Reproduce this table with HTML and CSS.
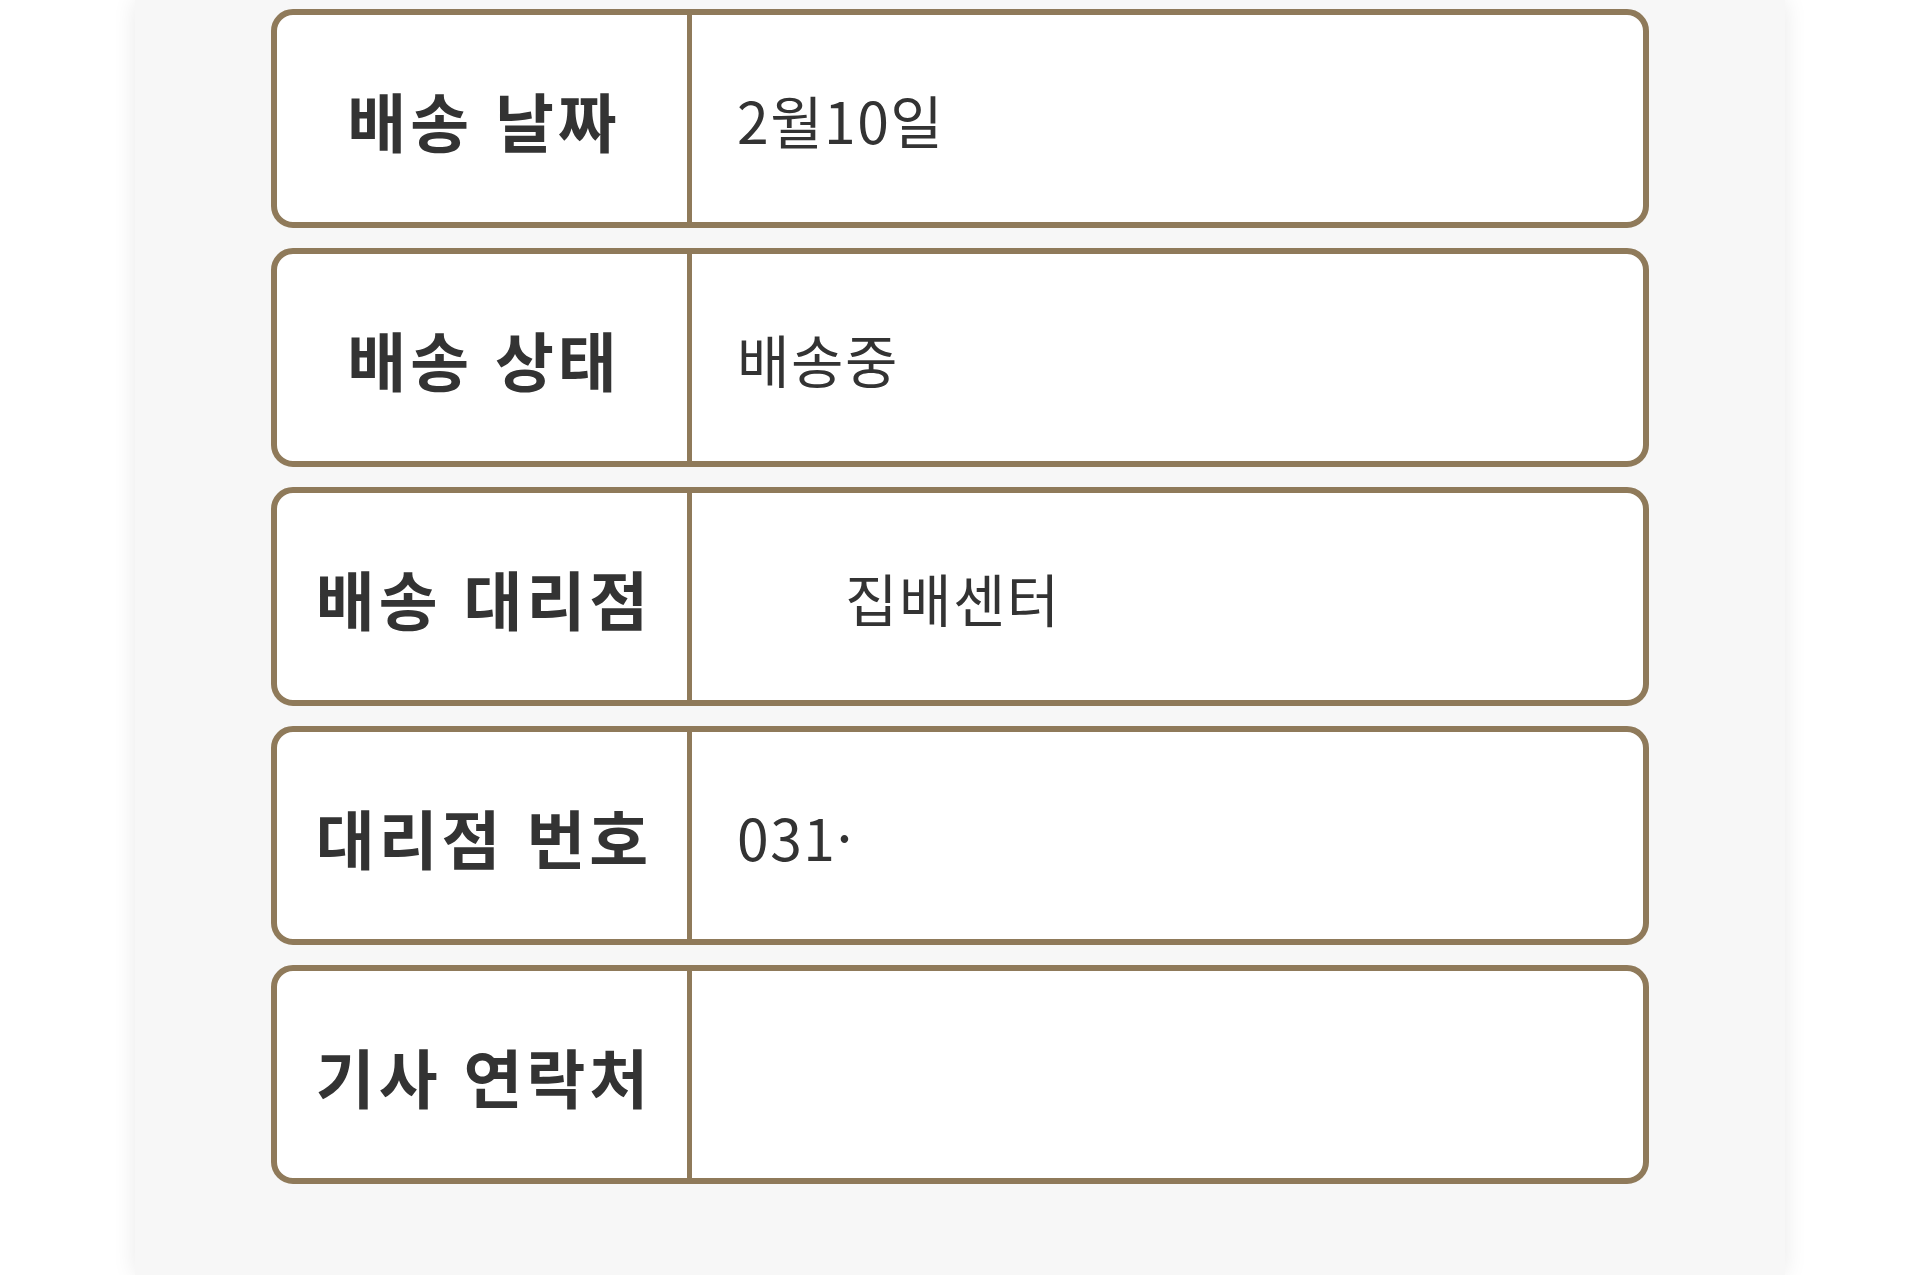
FILE: index.html
```html
<!DOCTYPE html>
<html lang="ko">
<head>
<meta charset="utf-8">
<title>배송 정보</title>
<link rel="stylesheet" href="styles.css">
</head>
<body>
<main class="panel">
  <section class="info-list">
    <div class="info-row">
      <div class="info-label">배송 날짜</div>
      <div class="info-value">2월10일</div>
    </div>
    <div class="info-row">
      <div class="info-label">배송 상태</div>
      <div class="info-value">배송중</div>
    </div>
    <div class="info-row">
      <div class="info-label">배송 대리점</div>
      <div class="info-value"><span class="indent">집배센터</span></div>
    </div>
    <div class="info-row">
      <div class="info-label">대리점 번호</div>
      <div class="info-value">031·</div>
    </div>
    <div class="info-row">
      <div class="info-label">기사 연락처</div>
      <div class="info-value"></div>
    </div>
  </section>
</main>
</body>
</html>
```

FILE: styles.css
```css
html, body {
  margin: 0;
  padding: 0;
  background: #ffffff;
}

body {
  font-family: "Noto Sans CJK KR", "Noto Sans", sans-serif;
  color: #333333;
}

.panel {
  width: 1650px;
  min-height: 1275px;
  margin: 0 auto;
  background: #f7f7f7;
  box-shadow: 0 0 22px rgba(0, 0, 0, 0.09);
  box-sizing: border-box;
  padding: 9px 136px 0;
}

.info-list {
  display: flex;
  flex-direction: column;
  gap: 20px;
}

.info-row {
  display: grid;
  grid-template-columns: 415px 1fr;
  height: 219px;
  box-sizing: border-box;
  border: 6px solid #8f7a5a;
  border-radius: 22px;
  background: #ffffff;
  overflow: hidden;
}

.info-label {
  display: flex;
  align-items: center;
  justify-content: center;
  border-right: 5px solid #8f7a5a;
  padding-left: 4px;
  font-weight: 700;
  font-size: 64px;
  letter-spacing: 4px;
  color: #333333;
  white-space: nowrap;
}

.info-value {
  display: flex;
  align-items: center;
  padding-left: 45px;
  font-size: 57px;
  letter-spacing: 1.5px;
  font-weight: 400;
  color: #333333;
}

.indent {
  margin-left: 108px;
}
```
